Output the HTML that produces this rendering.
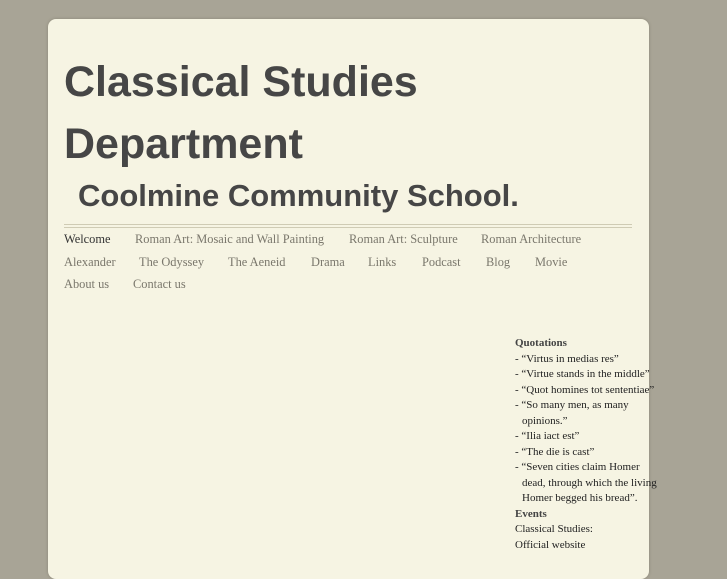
<!DOCTYPE html>
<html><head><style>
html,body{margin:0;width:727px;height:545px;overflow:hidden;background:#a8a496;font-family:"Liberation Serif",serif;}
.card{position:absolute;left:48px;top:19px;width:601px;height:560px;background:#f6f4e3;border-radius:8px;box-shadow:0 0 3px #8a8676;}
.t{position:absolute;font-family:"Liberation Sans",sans-serif;font-weight:bold;color:#464646;white-space:nowrap;}
.rule{position:absolute;left:64px;width:568px;height:2px;border-top:1px solid #cfcbb4;border-bottom:1px solid #cfcbb4;top:224px}
.nav{position:absolute;font-size:12.4px;color:#7a776c;white-space:nowrap}
.side{position:absolute;left:515px;top:336px;font-size:11px;line-height:15.5px;color:#222;width:150px}
.side b{color:#444}
.li2{padding-left:7px}
</style></head><body>
<div class="card"></div>
<div class="t" style="left:64px;top:58px;font-size:43px;">Classical Studies</div>
<div class="t" style="left:64px;top:120px;font-size:43px;">Department</div>
<div class="t" style="left:78px;top:178px;font-size:31px;">Coolmine Community School.</div>
<div class="rule"></div>
<div class="nav" style="left:64px;top:232px;color:#333">Welcome</div>
<div class="nav" style="left:135px;top:232px">Roman Art: Mosaic and Wall Painting</div>
<div class="nav" style="left:349px;top:232px">Roman Art: Sculpture</div>
<div class="nav" style="left:481px;top:232px">Roman Architecture</div>
<div class="nav" style="left:64px;top:255px">Alexander</div>
<div class="nav" style="left:139px;top:255px">The Odyssey</div>
<div class="nav" style="left:228px;top:255px">The Aeneid</div>
<div class="nav" style="left:311px;top:255px">Drama</div>
<div class="nav" style="left:368px;top:255px">Links</div>
<div class="nav" style="left:422px;top:255px">Podcast</div>
<div class="nav" style="left:486px;top:255px">Blog</div>
<div class="nav" style="left:535px;top:255px">Movie</div>
<div class="nav" style="left:64px;top:277px">About us</div>
<div class="nav" style="left:133px;top:277px">Contact us</div>
<div class="side">
<b>Quotations</b><br>
- “Virtus in medias res”<br>
- “Virtue stands in the middle”<br>
- “Quot homines tot sententiae”<br>
- “So many men, as many<br><span class="li2">opinions.”</span><br>
- “Ilia iact est”<br>
- “The die is cast”<br>
- “Seven cities claim Homer<br><span class="li2">dead, through which the living</span><br><span class="li2">Homer begged his bread”.</span><br>
<b>Events</b><br>
Classical Studies:<br>
Official website
</div>
</body></html>
